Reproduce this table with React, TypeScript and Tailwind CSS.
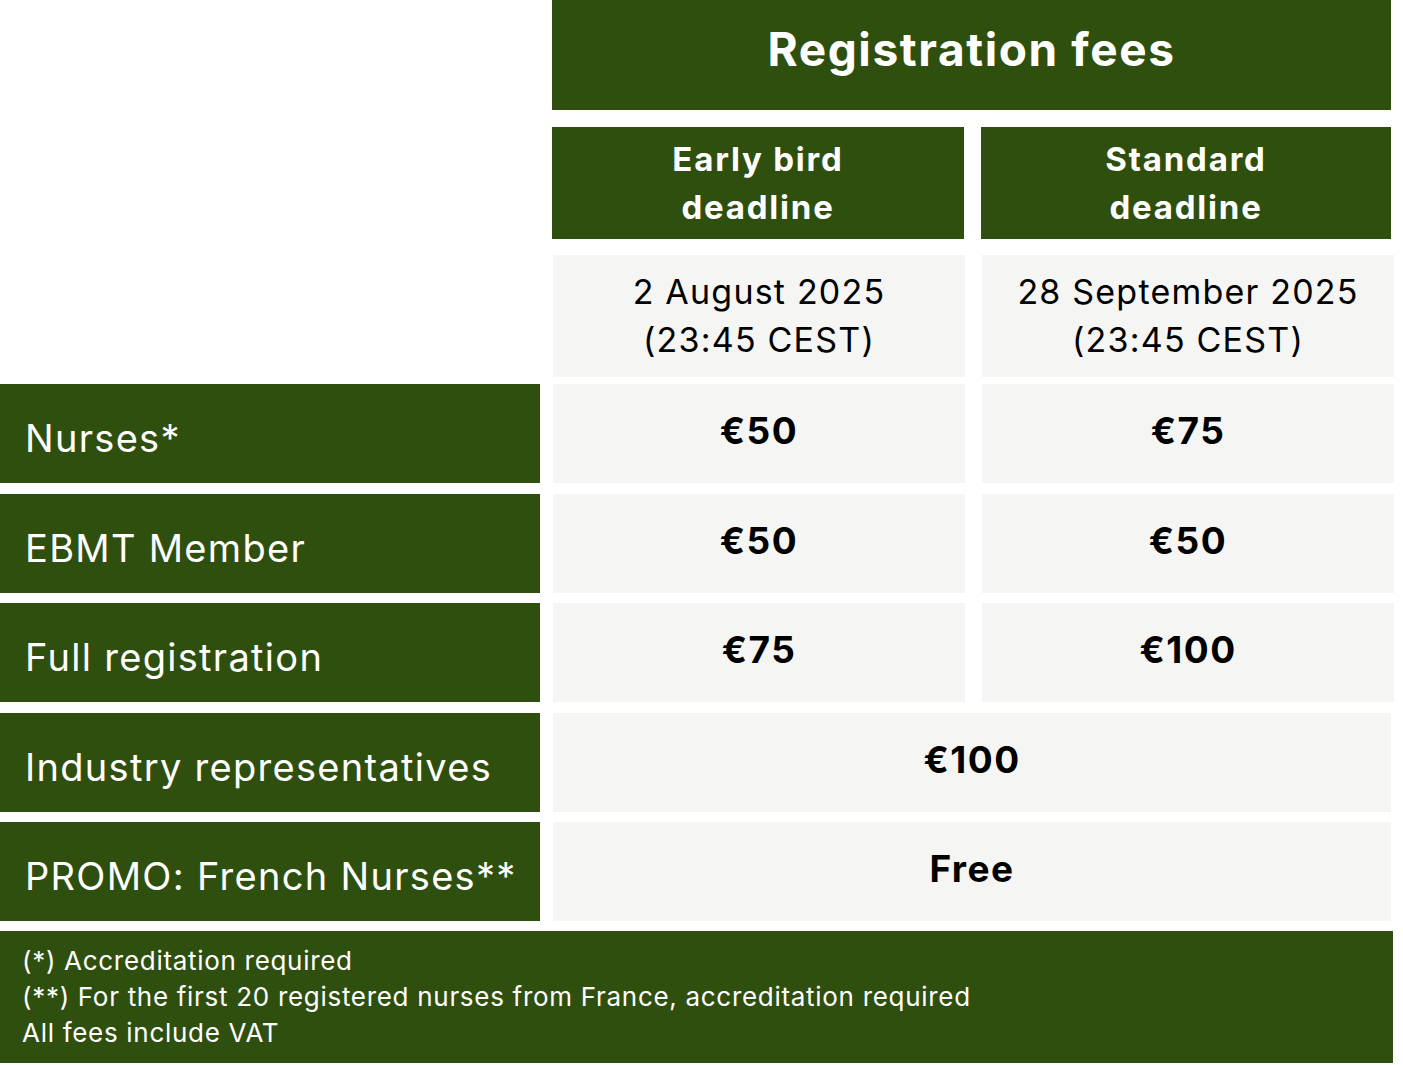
import React from "react";

const G = "bg-[#2f4f0f]";
const C = "bg-[#f5f5f3]";
const PRICE = "flex justify-center pt-[28px] text-black font-bold text-[37px] leading-none tracking-[1.5px]";

function Row({ label, a, b, span, mt }: { label: string; a?: string; b?: string; span?: string; mt: string }) {
  return (
    <div className={`flex ${mt}`}>
      <div className={`${G} w-[540px] h-[99px] flex items-center pl-[25px] pt-[8px] text-white text-[38px] leading-none tracking-[1.3px]`}>
        {label}
      </div>
      {span ? (
        <div className={`${C} ml-[13px] w-[838px] h-[99px] ${PRICE}`}>{span}</div>
      ) : (
        <>
          <div className={`${C} ml-[13px] w-[412px] h-[99px] ${PRICE}`}>{a}</div>
          <div className={`${C} ml-[17px] w-[412px] h-[99px] ${PRICE}`}>{b}</div>
        </>
      )}
    </div>
  );
}

export default function App() {
  return (
    <div className="w-[1403px] h-[1065px] bg-white overflow-hidden" style={{ fontFamily: "Inter, 'Noto Sans', sans-serif" }}>
      <div className="flex">
        <div className="w-[552px]" />
        <div className={`${G} w-[839px] h-[110px] flex items-center justify-center pb-[12px] text-white font-bold text-[46px] leading-none tracking-[1.6px]`}>
          Registration fees
        </div>
      </div>
      <div className="flex mt-[17px]">
        <div className="w-[552px]" />
        <div className={`${G} w-[412px] h-[112px] flex flex-col items-center justify-center text-white font-bold text-[33px] leading-[48px] tracking-[1.8px]`}>
          <span>Early bird</span>
          <span>deadline</span>
        </div>
        <div className={`${G} ml-[17px] w-[410px] h-[112px] flex flex-col items-center justify-center text-white font-bold text-[33px] leading-[48px] tracking-[1.8px]`}>
          <span>Standard</span>
          <span>deadline</span>
        </div>
      </div>
      <div className="flex mt-[16px]">
        <div className="w-[553px]" />
        <div className={`${C} w-[412px] h-[122px] flex flex-col items-center justify-center text-black text-[34px] leading-[48px] tracking-[1.2px]`}>
          <span>2 August 2025</span>
          <span>(23:45 CEST)</span>
        </div>
        <div className={`${C} ml-[17px] w-[412px] h-[122px] flex flex-col items-center justify-center text-black text-[34px] leading-[48px] tracking-[1.2px]`}>
          <span>28 September 2025</span>
          <span>(23:45 CEST)</span>
        </div>
      </div>
      <Row mt="mt-[7px]" label="Nurses*" a="€50" b="€75" />
      <Row mt="mt-[11px]" label="EBMT Member" a="€50" b="€50" />
      <Row mt="mt-[10px]" label="Full registration" a="€75" b="€100" />
      <Row mt="mt-[11px]" label="Industry representatives" span="€100" />
      <Row mt="mt-[10px]" label="PROMO: French Nurses**" span="Free" />
      <div className={`${G} mt-[10px] w-[1393px] h-[132px] pl-[22px] pt-[12px] text-white text-[26px] leading-[36px] tracking-[0.7px]`}>
        <div>(*) Accreditation required</div>
        <div>(**) For the first 20 registered nurses from France, accreditation required</div>
        <div>All fees include VAT</div>
      </div>
    </div>
  );
}
